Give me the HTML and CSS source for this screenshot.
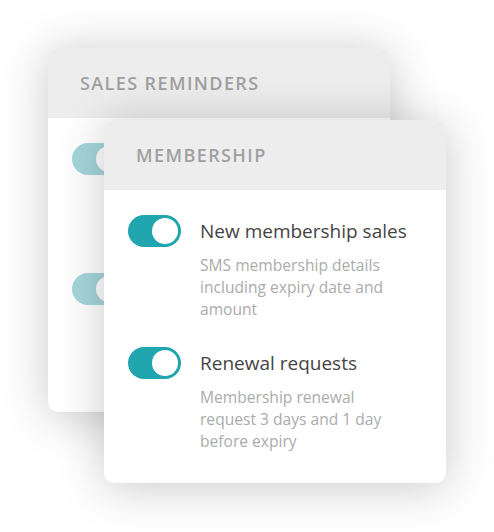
FILE: index.html
```html
<!DOCTYPE html>
<html lang="en">
<head>
  <meta charset="UTF-8">
  <meta name="viewport" content="width=device-width, initial-scale=1.0">
  <title>Reminders</title>
  <link rel="stylesheet" href="styles.css">
</head>
<body>
  <div class="stack">
    <div class="card card-back">
      <div class="card-header">Sales reminders</div>
      <div class="card-body">
        <div class="setting setting-hidden">
          <span class="toggle toggle-faded"></span>
        </div>
        <div class="setting setting-hidden">
          <span class="toggle toggle-faded"></span>
        </div>
      </div>
    </div>

    <div class="card card-front">
      <div class="card-header">Membership</div>
      <div class="card-body">
        <div class="setting">
          <span class="toggle"></span>
          <div class="setting-text">
            <div class="setting-title">New membership sales</div>
            <div class="setting-desc">SMS membership details including expiry date and amount</div>
          </div>
        </div>
        <div class="setting">
          <span class="toggle"></span>
          <div class="setting-text">
            <div class="setting-title">Renewal requests</div>
            <div class="setting-desc">Membership renewal request 3 days and 1 day before expiry</div>
          </div>
        </div>
      </div>
    </div>
  </div>
</body>
</html>
```

FILE: styles.css
```css
* {
  margin: 0;
  padding: 0;
  box-sizing: border-box;
}

body {
  font-family: "Open Sans", "DejaVu Sans", sans-serif;
  background-color: #fff;
  height: 100vh;
  overflow: hidden;
}

.stack {
  display: grid;
  padding: 48px 0 0 48px;
}

.card {
  grid-area: 1 / 1;
  width: 342px;
  height: 364px;
  background-color: #fff;
  border-radius: 10px;
  overflow: hidden;
  box-shadow: 0 4px 48px rgba(0, 0, 0, 0.22);
}

.card-front {
  margin: 72px 0 0 56px;
  height: 363px;
}

.card-header {
  height: 70px;
  line-height: 70px;
  padding-left: 32px;
  background-color: #ededed;
  color: #a0a0a0;
  font-size: 18px;
  font-weight: 600;
  letter-spacing: 1.4px;
  text-transform: uppercase;
}

.card-body {
  display: flex;
  flex-direction: column;
  gap: 27px;
  padding: 25px 48px 0 24px;
}

.setting {
  display: flex;
  align-items: flex-start;
  gap: 19px;
}

.setting-hidden {
  min-height: 103px;
}

.toggle {
  flex: none;
  display: flex;
  justify-content: flex-end;
  align-items: center;
  width: 53px;
  height: 32px;
  padding: 3px;
  border-radius: 16px;
  background-color: #21a5af;
}

.toggle::after {
  content: '';
  width: 26px;
  height: 26px;
  border-radius: 50%;
  background-color: #fff;
}

.toggle-faded {
  background-color: #a6d6da;
}

.setting-title {
  font-size: 19px;
  line-height: 32px;
  color: #444;
  white-space: nowrap;
}

.setting-desc {
  margin-top: 7px;
  font-size: 15.6px;
  line-height: 22px;
  color: #ababab;
}
```
